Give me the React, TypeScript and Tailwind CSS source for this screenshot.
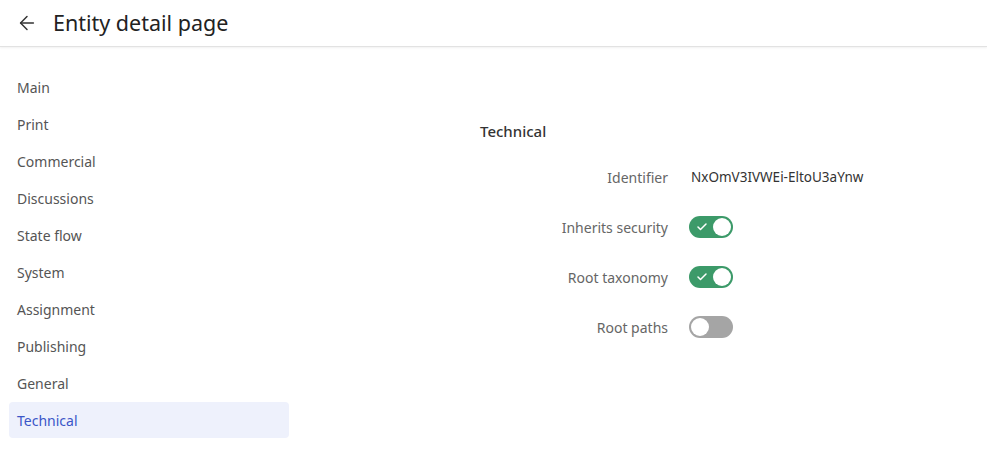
import { ArrowLeft, Check } from 'lucide-react';

const sections = [
  'Main',
  'Print',
  'Commercial',
  'Discussions',
  'State flow',
  'System',
  'Assignment',
  'Publishing',
  'General',
  'Technical',
];

function Toggle({ on }: { on: boolean }) {
  return (
    <div
      className={`-ml-[2px] w-11 h-[22px] rounded-full p-[2px] flex items-center ${
        on ? 'bg-[#3c9a69] justify-end' : 'bg-[#a5a5a5] justify-start'
      }`}
    >
      {on && <Check className="w-3 h-3 text-white mr-auto ml-[5px]" strokeWidth={3} />}
      <div className="w-[18px] h-[18px] rounded-full bg-white" />
    </div>
  );
}

export default function App() {
  const active = 'Technical';

  return (
    <div className="min-h-screen bg-white text-[14px] text-[#333]" style={{ fontFamily: '"Noto Sans", "Open Sans", sans-serif' }}>
      {/* Header */}
      <div className="h-[47px] flex items-center border-b border-[#e2e2e2] shadow-[0_1px_2px_rgba(0,0,0,0.06)]">
        <button className="ml-[16px] text-[#333]">
          <ArrowLeft className="w-[22px] h-[22px]" strokeWidth={1.6} />
        </button>
        <h1 className="ml-[15px] text-[21.5px] text-[#222] leading-none">Entity detail page</h1>
      </div>

      <div className="flex">
        {/* Side nav */}
        <div className="w-[298px] pl-[9px] pr-[9px] pt-[22px] flex flex-col gap-px">
          {sections.map((s) => (
            <div
              key={s}
              className={`h-9 flex items-center px-2 rounded ${
                s === active ? 'bg-[#eef1fc] text-[#3b56c8]' : 'text-[#555]'
              }`}
            >
              {s}
            </div>
          ))}
        </div>

        {/* Content */}
        <div className="flex-1 pl-[182px] pt-[73px]">
          <h2 className="text-[15px] font-medium text-[#333] leading-[22px]">Technical</h2>
          <div className="mt-[10px] grid grid-cols-[188px_auto] gap-x-[23px] auto-rows-[50px] items-center">
            <div className="text-right text-[#666]">Identifier</div>
            <div className="text-[#333] text-[13.5px]">NxOmV3IVWEi-EltoU3aYnw</div>

            <div className="text-right text-[#666]">Inherits security</div>
            <div><Toggle on /></div>

            <div className="text-right text-[#666]">Root taxonomy</div>
            <div><Toggle on /></div>

            <div className="text-right text-[#666]">Root paths</div>
            <div><Toggle on={false} /></div>
          </div>
        </div>
      </div>
    </div>
  );
}
